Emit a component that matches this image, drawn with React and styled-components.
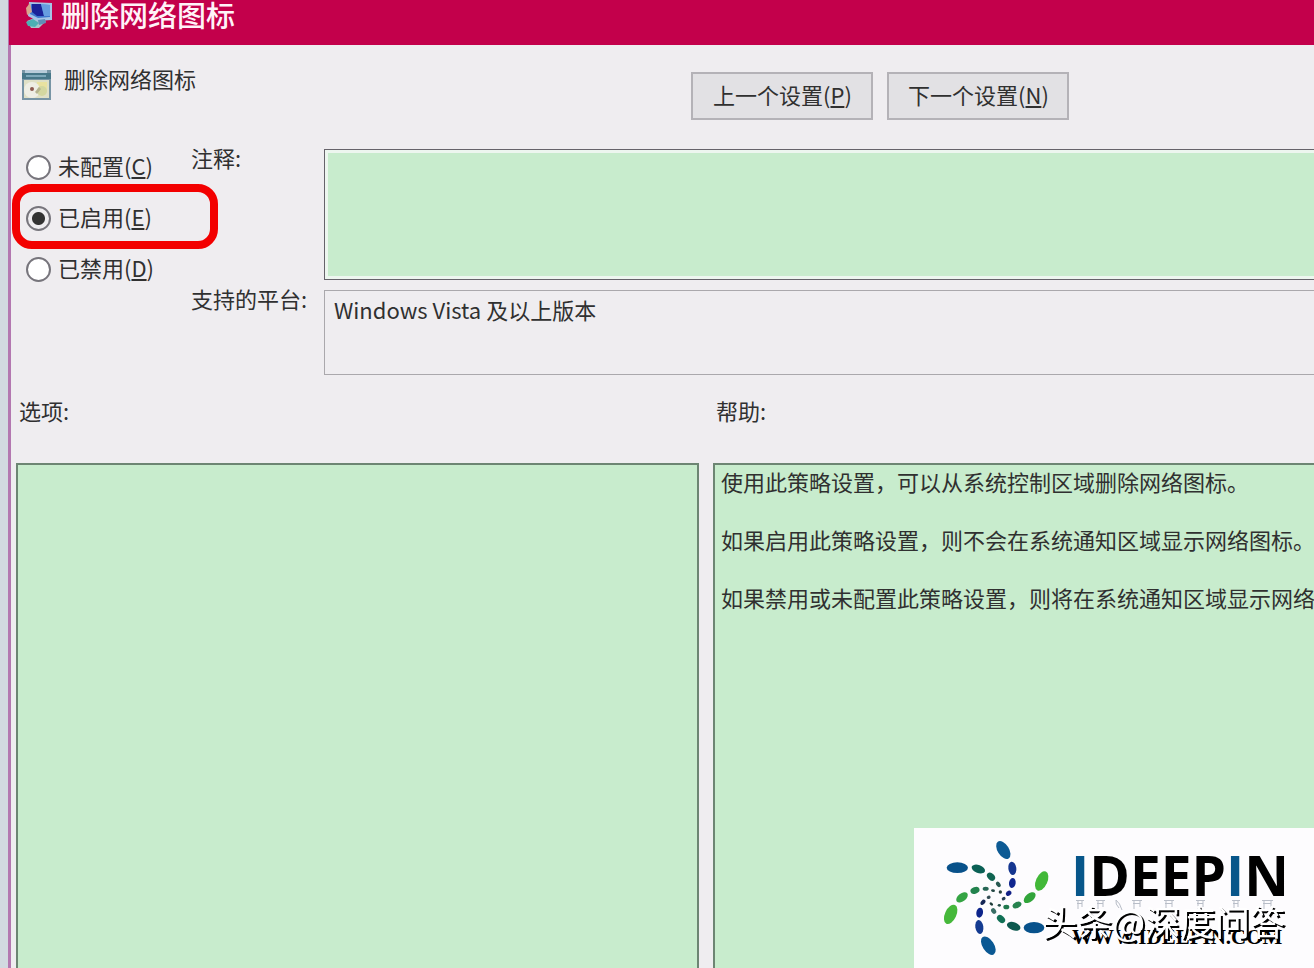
import React, { Component } from 'react';
import styled, { createGlobalStyle } from 'styled-components';

const GlobalStyle = createGlobalStyle`
  * {
    box-sizing: border-box;
  }

  body {
    margin: 0;
    overflow: hidden;
  }

  body, button, input, textarea {
    font-family: "Noto Sans CJK SC", "Noto Sans", sans-serif;
    font-size: 22px;
    line-height: 29px;
    color: #303030;
  }
`;

const Desktop = styled.div`
  display: flex;
  height: 100vh;
  padding-left: 8px;
  background-color: #d2d9e0;
  overflow: hidden;
`;

const Window = styled.main`
  position: relative;
  display: flex;
  flex: 1;
  flex-direction: column;
  min-width: 0;
  border-left: 3px solid #b377b0;
  background-color: #efedf0;
`;

const TitleBar = styled.header`
  display: flex;
  flex-shrink: 0;
  height: 45px;
  padding: 0 16px 18px;
  margin-left: -2px;
  align-items: center;
  gap: 6px;
  background-color: #c3004b;
`;

const Title = styled.h1`
  margin: 0;
  color: #fff3f8;
  font-size: 29px;
  font-weight: 500;
  line-height: 32px;
`;

const Toolbar = styled.div`
  display: grid;
  flex-shrink: 0;
  grid-template-columns: 14fr 13fr;
  height: 104px;
  padding: 27px 0 0 10px;
`;

const SettingName = styled.h2`
  display: flex;
  align-items: flex-start;
  gap: 12px;
  margin: -3px 0 0;
  font-size: 22px;
  font-weight: 400;
  line-height: 29px;

  span {
    margin-top: -5px;
  }
`;

const Buttons = styled.div`
  display: flex;
  align-items: flex-start;
  gap: 14px;
`;

const Button = styled.button`
  width: 182px;
  height: 48px;
  padding: 0 0 4px;
  border: 2px solid #b4b2b7;
  background-color: #e2e1e4;
  white-space: nowrap;
`;

const Settings = styled.div`
  display: grid;
  flex-shrink: 0;
  grid-template-columns: 165px 133px 1fr;
  grid-template-rows: 131px 85px;
  row-gap: 10px;
  padding-left: 15px;
`;

const States = styled.fieldset`
  display: flex;
  flex-direction: column;
  grid-row: 1 / 3;
  gap: 22px;
  margin: 0;
  padding: 4px 0 0;
  border: none;
`;

const State = styled.label`
  position: relative;
  display: flex;
  align-items: center;
  gap: 7px;
  white-space: nowrap;
`;

const StateName = styled.span`
  margin-top: -3px;
  padding-bottom: 3px;
  line-height: 26px;
`;

const Radio = styled.input`
  width: 25px;
  height: 25px;
  margin: 2px 0;
  appearance: none;
  border: 2px solid #77757c;
  border-radius: 50%;
  background-color: #fff;

  &:checked {
    background: radial-gradient(circle, #333 6px, #efedf0 7px);
  }
`;

const Highlight = styled.span`
  position: absolute;
  top: -20px;
  left: -14px;
  width: 206px;
  height: 65px;
  border: 8px solid #f30000;
  border-radius: 20px;
  pointer-events: none;
`;

const FieldLabel = styled.label`
  margin-top: -6px;
`;

const Comment = styled.textarea`
  width: 100%;
  height: 100%;
  padding: 6px 8px;
  resize: none;
  outline: none;
  border: 1px solid #66636a;
  border-right: none;
  background-color: #c8eccd;
  box-shadow: inset 3px 3px #edf6ef, inset 0 -3px #edf6ef;
`;

const Platform = styled.output`
  padding: 4px 9px;
  border: 1px solid #aaa8ac;
  border-right: none;
`;

const Panels = styled.div`
  display: grid;
  flex: 1;
  grid-template-columns: 25fr 22fr;
  gap: 14px;
  min-height: 0;
  padding-left: 5px;
`;

const Panel = styled.section`
  display: flex;
  flex-direction: column;
  min-width: 0;
`;

const PanelTitle = styled.h3`
  flex-shrink: 0;
  height: 88px;
  margin: 0;
  padding: 21px 3px 0;
  font-size: 22px;
  font-weight: 400;
  line-height: 29px;
`;

const PanelBox = styled.div`
  flex: 1;
  padding: 2px 6px;
  overflow: hidden;
  border: 2px solid #6d8573;
  border-width: ${props => (props.$open ? '2px 0 0 2px' : '2px 2px 0 2px')};
  background-color: #c8eccd;
  white-space: nowrap;

  p {
    margin: 0 0 29px;
  }
`;

const Watermark = styled.aside`
  position: absolute;
  right: 0;
  bottom: 0;
  width: 400px;
  height: 140px;
  background-color: #fdfcfe;
`;

const Credit = styled.text`
  font-family: "Noto Sans CJK SC", sans-serif;
  font-size: 35px;
  fill: #fff;
  filter: drop-shadow(2px 2px 0 #000);
`;

const MonitorIcon = () => (
  <svg width="30" height="30" viewBox="0 0 30 30" aria-hidden="true">
    <path d="M2 22l10-4 9 4-7 7-8 0z" fill="#a9c5cb" />
    <path d="M1 23l7-3 6 4-4 4-7-1z" fill="#4cb0b4" />
    <path d="M4 3l23 1v17l-15 1L3 17z" fill="#a5c4e6" />
    <path d="M6 5l19 1v12l-12 1-8-4z" fill="#3f78cf" />
    <path d="M7 5h9l3 12-7 0-5-4z" fill="#1b2298" />
    <path d="M16 5l9 1v11l-6 0z" fill="#679de0" />
    <path d="M1 9l4-5 2 9-5 3z" fill="#d9a58c" />
    <path d="M13 21l7-1 1 4-7 2z" fill="#5f8fb8" />
  </svg>
);

const PolicyIcon = () => (
  <svg width="31" height="32" viewBox="0 0 31 32" aria-hidden="true">
    <path d="M1 1h29v30H1z" fill="#7895a5" />
    <path d="M4 1h22v3H4z" fill="#b9ccda" />
    <path d="M1 4h29v6H1z" fill="#477789" />
    <path d="M5 6h20v2H5z" fill="#7ea9bb" />
    <path d="M3 11h25v18H3z" fill="#dfe0c6" />
    <path d="M16 13h10v10H16z" fill="#e9e2a0" />
    <circle cx="11" cy="21" r="8" fill="#eeeee4" />
    <circle cx="21" cy="22" r="5" fill="#d3d7a0" />
    <circle cx="11" cy="20" r="2" fill="#8c5a50" />
    <path d="M14 23l4-5 2 2-4 5z" fill="#b5b48f" />
  </svg>
);

// cx, cy, rx, ry, angle, fill
const petals = [
  [205, 60, 30, 17, 58, '#0d5a94'],
  [232, 115, 20, 12, 82, '#153690'],
  [232, 159, 15, 10, 98, '#10268f'],
  [221, 190, 9, 7, 140, '#111f86'],
  [206, 206, 6, 5, 150, '#263d55'],
  [320, 153, 31, 17, 114, '#42b838'],
  [284, 203, 21, 12, 140, '#32a53b'],
  [246, 225, 14, 9, 155, '#27834f'],
  [214, 231, 9, 7, 0, '#20784d'],
  [193, 226, 5, 4, 0, '#244c47'],
  [297, 293, 31, 17, 0, '#08528c'],
  [236, 289, 21, 12, 20, '#0d594f'],
  [198, 267, 14, 10, 45, '#117055'],
  [176, 243, 9, 7, 55, '#396e65'],
  [169, 222, 6, 4, 40, '#203c3a'],
  [160, 347, 31, 17, 57, '#0a5893'],
  [133, 291, 21, 12, 82, '#143b91'],
  [134, 248, 15, 10, 100, '#0d248b'],
  [144, 217, 9, 6, 130, '#152656'],
  [161, 202, 6, 5, 160, '#344c54'],
  [47, 253, 31, 17, 115, '#46b83b'],
  [81, 202, 20, 12, 142, '#35a444'],
  [120, 181, 14, 10, 160, '#23834e'],
  [152, 176, 9, 6, 0, '#286756'],
  [174, 182, 6, 4, 10, '#244744'],
  [67, 113, 32, 16, 0, '#08518a'],
  [130, 117, 21, 12, 20, '#0b6055'],
  [168, 140, 14, 10, 45, '#106451'],
  [190, 163, 9, 6, 55, '#285952'],
  [196, 186, 5, 5, 0, '#29433f'],
];

// faint reflection marks under the wordmark
const reflection = [
  [162, 8], [182, 9], [218, 10], [250, 10], [282, 9], [318, 8], [348, 11],
];

const IdeepinLogo = () => (
  <svg width="400" height="140" viewBox="0 0 400 140" role="img" aria-label="IDEEPIN">
    <svg x="21" y="2" width="125" height="130" viewBox="0 0 375 390">
      {petals.map(([cx, cy, rx, ry, angle, fill]) => (
        <ellipse
          key={`${cx}-${cy}`}
          cx={cx}
          cy={cy}
          rx={rx}
          ry={ry}
          fill={fill}
          transform={`rotate(${angle} ${cx} ${cy})`}
        />
      ))}
    </svg>
    <text x="157" y="68" fontFamily="Open Sans" fontWeight="700" fontSize="55" fill="#000">
      <tspan fill="#07568a">I</tspan>DEEP<tspan fill="#07568a">I</tspan>N
    </text>
    <g fill="none" stroke="#b9bec8">
      {reflection.map(([x, width]) => (
        <path key={x} d={`M${x} 72.5h${width}M${x + 1} 75.5h${width - 3}M${x + 2} 73v8M${x + width - 2} 73v6`} />
      ))}
      <path d="M202 72q4 3 6 10M202 72q-1 4 3 8" />
    </g>
    <text x="158" y="116" fontFamily="Liberation Serif" fontWeight="700" fontSize="21" fill="#000">
      WWW.IDEEPIN.COM
    </text>
    <Credit x="128" y="108">头条@深度问答</Credit>
  </svg>
);

const states = [
  { value: 'none', name: '未配置', hotkey: 'C' },
  { value: 'enabled', name: '已启用', hotkey: 'E', marked: true },
  { value: 'disabled', name: '已禁用', hotkey: 'D' },
];

const help = [
  '使用此策略设置，可以从系统控制区域删除网络图标。',
  '如果启用此策略设置，则不会在系统通知区域显示网络图标。',
  '如果禁用或未配置此策略设置，则将在系统通知区域显示网络图标。',
];

class App extends Component {
  constructor(props) {
    super(props);
    this.state = {
      selected: 'enabled',
      comment: '',
    };
  }

  handleSelect = event => {
    this.setState({selected: event.target.value});
  }

  handleComment = event => {
    this.setState({comment: event.target.value});
  }

  render() {
    const {selected, comment} = this.state;

    return (
      <Desktop>
        <GlobalStyle />
        <Window>
          <TitleBar>
            <MonitorIcon />
            <Title>删除网络图标</Title>
          </TitleBar>
          <Toolbar>
            <SettingName>
              <PolicyIcon />
              <span>删除网络图标</span>
            </SettingName>
            <Buttons>
              <Button type="button">上一个设置(<u>P</u>)</Button>
              <Button type="button">下一个设置(<u>N</u>)</Button>
            </Buttons>
          </Toolbar>
          <Settings>
            <States>
              {states.map(({value, name, hotkey, marked}) => (
                <State key={value}>
                  <Radio
                    type="radio"
                    name="state"
                    value={value}
                    checked={selected === value}
                    onChange={this.handleSelect}
                  />
                  <StateName>{name}(<u>{hotkey}</u>)</StateName>
                  {marked && <Highlight />}
                </State>
              ))}
            </States>
            <FieldLabel htmlFor="comment">注释:</FieldLabel>
            <Comment id="comment" value={comment} onChange={this.handleComment} />
            <FieldLabel htmlFor="platform">支持的平台:</FieldLabel>
            <Platform id="platform">Windows Vista 及以上版本</Platform>
          </Settings>
          <Panels>
            <Panel>
              <PanelTitle>选项:</PanelTitle>
              <PanelBox />
            </Panel>
            <Panel>
              <PanelTitle>帮助:</PanelTitle>
              <PanelBox $open>
                {help.map(line => <p key={line}>{line}</p>)}
              </PanelBox>
            </Panel>
          </Panels>
          <Watermark>
            <IdeepinLogo />
          </Watermark>
        </Window>
      </Desktop>
    );
  }
}

export default App;
